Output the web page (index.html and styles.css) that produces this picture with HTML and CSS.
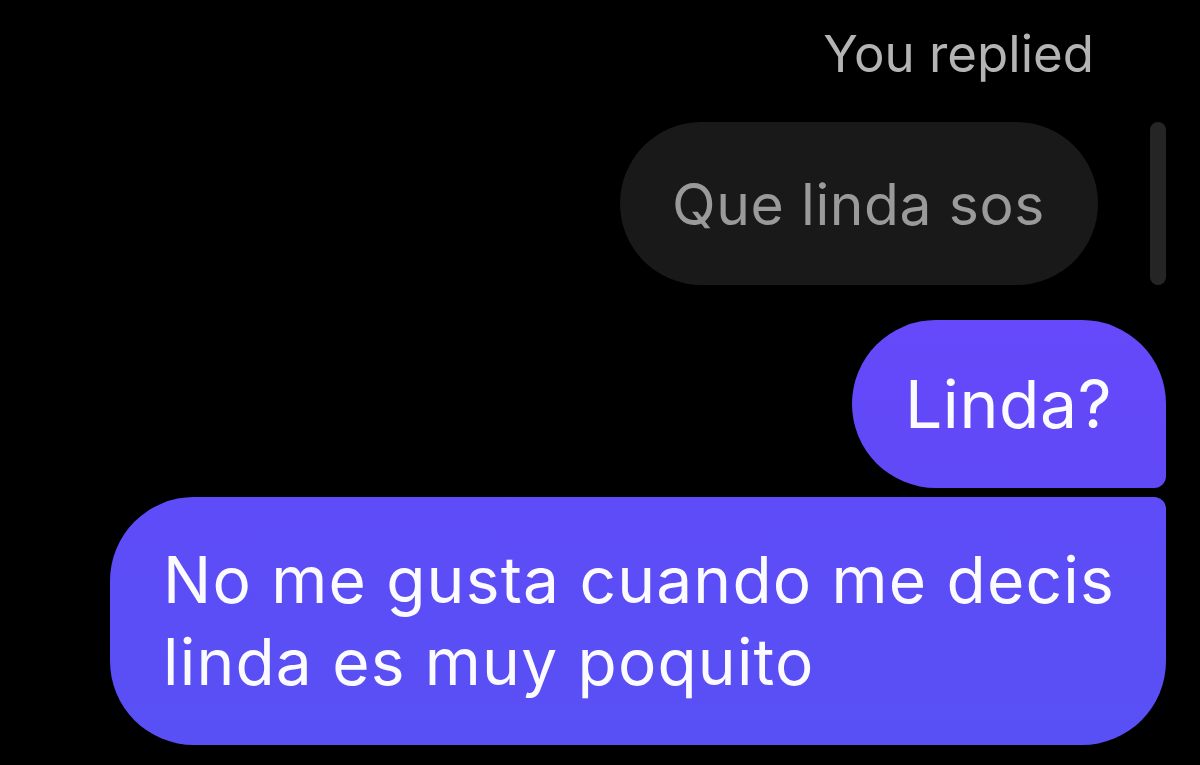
FILE: index.html
```html
<!DOCTYPE html>
<html>
  <head>
    <title>Messages</title>
    <link rel="stylesheet" href="styles.css">
  </head>
  <body>
    <div class="thread">
      <div class="reply-label">You replied</div>

      <div class="reply-quote">
        <div class="quote-bubble">Que linda sos</div>
        <div class="quote-bar"></div>
      </div>

      <div class="msg msg-first">Linda?</div>
      <div class="msg msg-last">No me gusta cuando me decis<br>linda es muy poquito</div>
    </div>
  </body>
</html>
```

FILE: styles.css
```css
body {
  margin: 0;
  background: #000;
  font-family: Inter, "Noto Sans", sans-serif;
}

.thread {
  display: flex;
  flex-direction: column;
  align-items: flex-end;
  padding: 24px 34px 0 0;
}

.reply-label {
  font-size: 51px;
  line-height: 60px;
  color: #b4b4b4;
  margin-right: 72px;
}

.reply-quote {
  display: flex;
  align-items: stretch;
  gap: 52px;
  margin-top: 38px;
}

.quote-bubble {
  background: #191919;
  color: #9a9a9a;
  font-size: 57px;
  letter-spacing: 0.6px;
  line-height: 68px;
  padding: 49px 53px 46px 52px;
  border-radius: 82px;
}

.quote-bar {
  width: 16px;
  background: #252525;
  border-radius: 8px;
}

/* outgoing messages, grouped: the corner at the join is tight */
.msg {
  color: #fbfbff;
  background: linear-gradient(180deg, #6549fa, #6049f7);
}

.msg-first {
  margin-top: 35px;
  font-size: 66px;
  letter-spacing: 0.6px;
  line-height: 80px;
  padding: 44px 54px 44px 53px;
  border-radius: 84px 84px 12px 84px;
}

.msg-last {
  margin-top: 9px;
  width: 1056px;
  box-sizing: border-box;
  font-size: 64px;
  letter-spacing: 1.2px;
  line-height: 82px;
  padding: 42px 40px 42px 53px;
  border-radius: 84px 12px 84px 84px;
  background: linear-gradient(180deg, #5e4cf8, #5850f4);
}
```
